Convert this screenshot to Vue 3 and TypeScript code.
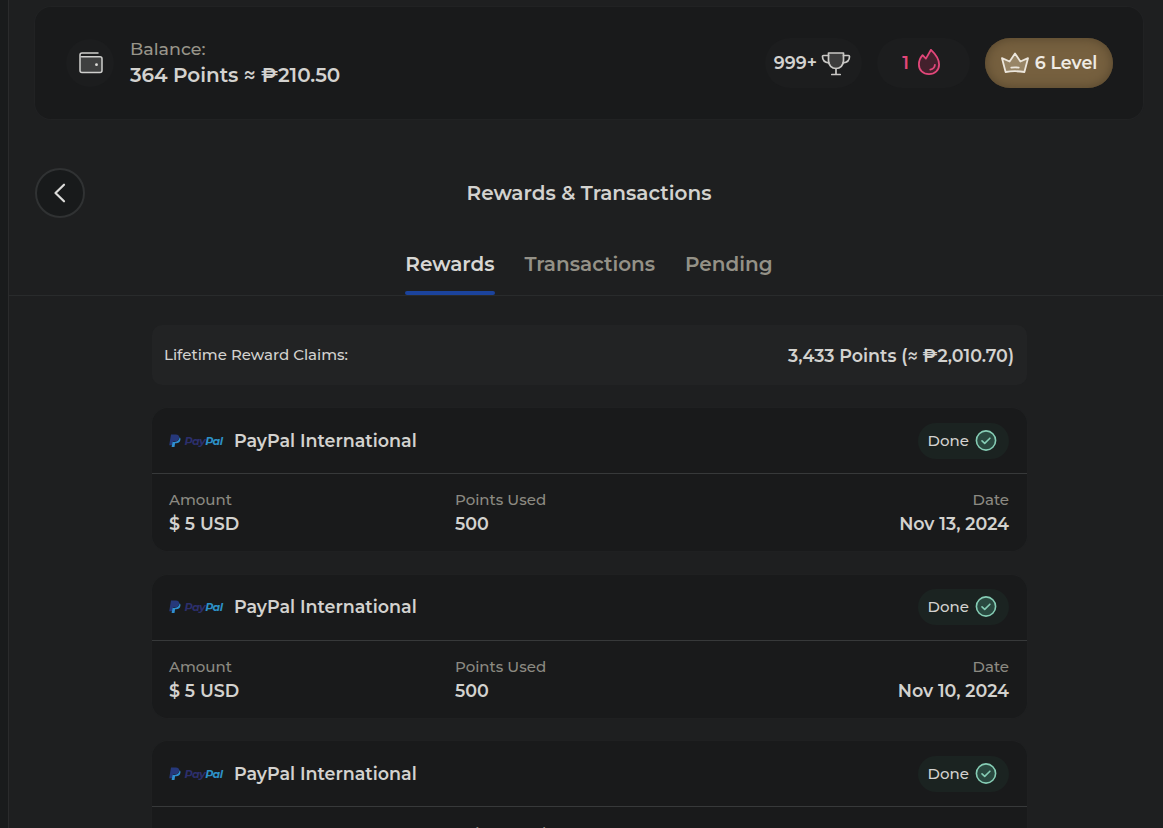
<script setup lang="ts">
import { ref } from 'vue'

interface Reward { id: number; points: string; amount: string; date: string }

const rewards: Reward[] = [
  { id: 1, points: '500', amount: '$ 5 USD', date: 'Nov 13, 2024' },
  { id: 2, points: '500', amount: '$ 5 USD', date: 'Nov 10, 2024' },
  { id: 3, points: '500', amount: '$ 5 USD', date: 'Nov 8, 2024' },
]
const tabs = ['Rewards', 'Transactions', 'Pending']
const active = ref('Rewards')
</script>

<template>
  <div class="page">
    <aside class="rail"></aside>
    <main class="main">
      <header class="topbar">
        <div class="wallet">
          <svg width="26" height="24" viewBox="0 0 26 24" fill="none">
            <path d="M2 5.200V19.500a2 2 0 0 0 2 2H22a2 2 0 0 0 2-2V7.700a2 2 0 0 0-2-2H3.600z" fill="#3f4040" />
            <path d="M20 2H4a2 2 0 0 0-2 2v15.500a2 2 0 0 0 2 2H22a2 2 0 0 0 2-2V7.700a2 2 0 0 0-2-2H3.500" stroke="#cfcfcd" stroke-width="1.500" stroke-linecap="round" />
            <circle cx="18.500" cy="13.700" r="1.400" fill="#deddda" />
          </svg>
        </div>
        <div class="balance">
          <span class="balance-label">Balance:</span>
          <span class="balance-value">364 Points ≈ ₱210.50</span>
        </div>
        <div class="pills">
          <div class="pill trophies"><span class="num">999+</span>
            <svg width="30" height="26" viewBox="0 -1 30 26" fill="none" stroke="#c9c8c5" stroke-width="1.700" stroke-linecap="round" stroke-linejoin="round">
              <path d="M7.500 2h15v7.500c0 5-3.300 8-7.500 8s-7.500-3-7.500-8z" fill="#3d3d3d" />
              <path d="M7.500 4.500H2.500a1 1 0 0 0-1 1c0 3.800 2.500 6 6.400 6.300M22.500 4.500h5a1 1 0 0 1 1 1c0 3.800-2.500 6-6.400 6.300M15 17.500v6M10.800 23.500h8.400" />
            </svg>
          </div>
          <div class="pill streak"><span class="num">1</span>
            <svg width="24" height="28" viewBox="0 1 24 28" fill="none" stroke="#e2477a" stroke-width="1.800" stroke-linecap="round" stroke-linejoin="round">
              <path d="M12 26.200C5.900 26.200 1.900 22 1.900 16.500c0-3.500 1.300-6.700 3.700-9.300l3.300 3.400L14 1.800c4.500 4.200 8.100 9.300 8.100 14.700 0 5.500-4 9.700-10.100 9.700z" fill="#43202c" />
              <path d="M17.900 16.800c-.2 2.600-1.900 4.400-4.600 4.800" />
            </svg>
          </div>
          <div class="pill level">
            <svg width="28" height="22" viewBox="0 0 28 22" fill="none" stroke="#ece6dc" stroke-width="1.800" stroke-linecap="round" stroke-linejoin="round">
              <path d="M4.600 20 1 6.200l7.600 3.300L14 1.500l5.400 8L27 6.200 23.400 20c-6-1-12.800-1-18.800 0z" fill="#988566" />
              <path d="M10.300 15.600c2.500-.3 5-.3 7.400 0" />
            </svg>
            <span class="num">6 Level</span>
          </div>
        </div>
      </header>

      <div class="heading">
        <button class="back" aria-label="Back">
          <svg width="14" height="22" viewBox="0 0 14 22" fill="none" stroke="#dcdcda" stroke-width="2.200" stroke-linecap="round" stroke-linejoin="round"><path d="M11 2.700 2.500 11l8.500 8.300" /></svg>
        </button>
        <h1>Rewards &amp; Transactions</h1>
      </div>

      <nav class="tabs">
        <button v-for="tab in tabs" :key="tab" :class="['tab', { on: tab === active }]" @click="active = tab">{{ tab }}</button>
      </nav>

      <section class="content">
        <div class="lifetime">
          <span class="lifetime-label">Lifetime Reward Claims:</span>
          <span class="lifetime-value">3,433 Points (≈ ₱2,010.70)</span>
        </div>
        <article v-for="r in rewards" :key="r.id" class="card">
          <div class="card-head">
            <svg class="paypal" width="56" height="16" viewBox="0 0 56 16">
              <path d="M3 1.500h4.800c2.500 0 3.800 1.300 3.300 3.500-.5 2.400-2.200 3.500-4.600 3.500H5.100L4.400 12.300H1.200z" fill="#26387a" />
              <path d="M11.700 4.300c.7.700.9 1.600.7 2.600-.5 2.300-2.100 3.300-4.300 3.300H7.100L6.500 14H3.600l1-5.100h2.100c2.500 0 4.400-1.400 5-4.600z" fill="#2f8fd0" />
              <text x="16.500" y="12" class="brand" textLength="38.500"><tspan fill="#2c2f6c">Pay</tspan><tspan fill="#2d91c8">Pal</tspan></text>
            </svg>
            <span class="method">PayPal International</span>
            <span class="status"><span class="status-text">Done</span>
              <svg width="22" height="22" viewBox="0 0.500 22 22" fill="none" stroke="#86cdb5" stroke-linecap="round" stroke-linejoin="round"><circle cx="11" cy="11" r="9.600" fill="#29483f" stroke-width="1.600" /><path d="m7 11.300 2.700 2.600 5.200-5.200" stroke-width="1.600" /></svg>
            </span>
          </div>
          <dl class="facts">
            <div><dt>Amount</dt><dd>{{ r.amount }}</dd></div>
            <div><dt>Points Used</dt><dd>{{ r.points }}</dd></div>
            <div><dt>Date</dt><dd>{{ r.date }}</dd></div>
          </dl>
        </article>
      </section>
    </main>
  </div>
</template>

<style>
body { background: #1e1f20; }
</style>

<style scoped>
.page { display: flex; height: 828px; overflow: hidden; background: #1e1f20; color: #d3d2cf; font-family: Montserrat, Inter, "Open Sans", sans-serif; font-weight: 600; }
.rail { flex: 0 0 8px; background: #191b1c; border-right: 1px solid #2a2b2c; }
.main { flex: 1; min-width: 0; }
.topbar { display: flex; align-items: center; box-sizing: border-box; height: 112px; margin: 7px 20px 0 26px; padding: 0 30px 0 31px; border-radius: 16px; background: #191a1b; box-shadow: 0 0 0 1px #212223; }
.wallet { display: grid; place-items: center; box-sizing: border-box; width: 48px; height: 48px; padding-left: 1px; border-radius: 50%; background: #1c1d1e; }
.balance { display: flex; flex-direction: column; align-items: flex-start; margin: 0 0 2px 16px; }
.balance-label { font-size: 17.5px; line-height: 26px; font-weight: 500; color: #98958a; }
.balance-value { font-size: 20px; line-height: 26px; letter-spacing: -0.04px; }
.pills { display: flex; gap: 15px; margin-left: auto; }
.pill { display: flex; align-items: center; justify-content: center; box-sizing: border-box; height: 50px; border-radius: 25px; background: #1c1d1e; font-size: 17.5px; }
.num { padding-bottom: 2px; }
.trophies { width: 97px; gap: 4px; padding-right: 2px; }
.streak { width: 93px; gap: 8px; padding-right: 4px; color: #e2477a; }
.level { width: 128px; gap: 6px; color: #efebe4; background: #76603f; box-shadow: inset 0 0 12px #54442c; }
.heading { display: flex; align-items: center; height: 50px; margin: 49px 0 0 26px; }
.back { display: grid; place-items: center; box-sizing: border-box; width: 50px; height: 50px; padding: 0; border: 2px solid #303233; border-radius: 50%; background: #181a1b; }
h1 { flex: 1; margin: 0 95px 1px 25px; text-align: center; font-size: 20px; line-height: 24px; font-weight: 600; }
.tabs { display: flex; justify-content: center; gap: 30px; height: 77px; padding-left: 6px; border-bottom: 1px solid #292b2c; }
.tab { position: relative; height: 77px; padding: 14px 0 0; border: 0; background: none; color: #949187; font: inherit; font-size: 20px; }
.tab.on { color: #d8d7d4; }
.tab.on::after { content: ""; position: absolute; left: 0; right: 0; bottom: 0; height: 4px; border-radius: 2px; background: #1b439c; }
.content { width: 875px; margin: 29px 0 0 143px; }
.lifetime { display: flex; align-items: center; justify-content: space-between; box-sizing: border-box; height: 60px; margin-bottom: 23.200px; padding: 0 13px 0 12px; border-radius: 10px; background: #222324; }
.lifetime-label { padding-bottom: 2px; font-size: 15px; font-weight: 500; }
.lifetime-value { font-size: 17.5px; }
.card { height: 143px; margin-bottom: 23.500px; border-radius: 16px; background: #191a1b; box-shadow: 0 0 0 1px #1f2021; }
.card-head { display: flex; align-items: center; box-sizing: border-box; height: 66px; padding: 0 18px 0 16px; border-bottom: 1px solid #37393a; }
.brand { font: italic 700 11px Montserrat, Inter, sans-serif; }
.method { margin-left: 10px; padding-bottom: 1px; font-size: 17.5px; }
.status { display: flex; align-items: center; justify-content: center; box-sizing: border-box; gap: 6px; width: 91px; height: 36px; margin-left: auto; padding-right: 2px; border-radius: 18px; background: #1b2321; font-size: 15px; font-weight: 500; }
.status svg { margin-left: 0.5px; }
.status-text { padding-bottom: 1px; }
.facts { display: grid; grid-template-columns: 286px 1fr 286px; margin: 0; padding: 13px 18px 0 17px; }
.facts > div:last-child { text-align: right; }
dt { font-size: 15px; line-height: 25px; font-weight: 500; color: #8c8a82; }
dd { margin: 0; font-size: 17.5px; line-height: 24.600px; }
</style>
